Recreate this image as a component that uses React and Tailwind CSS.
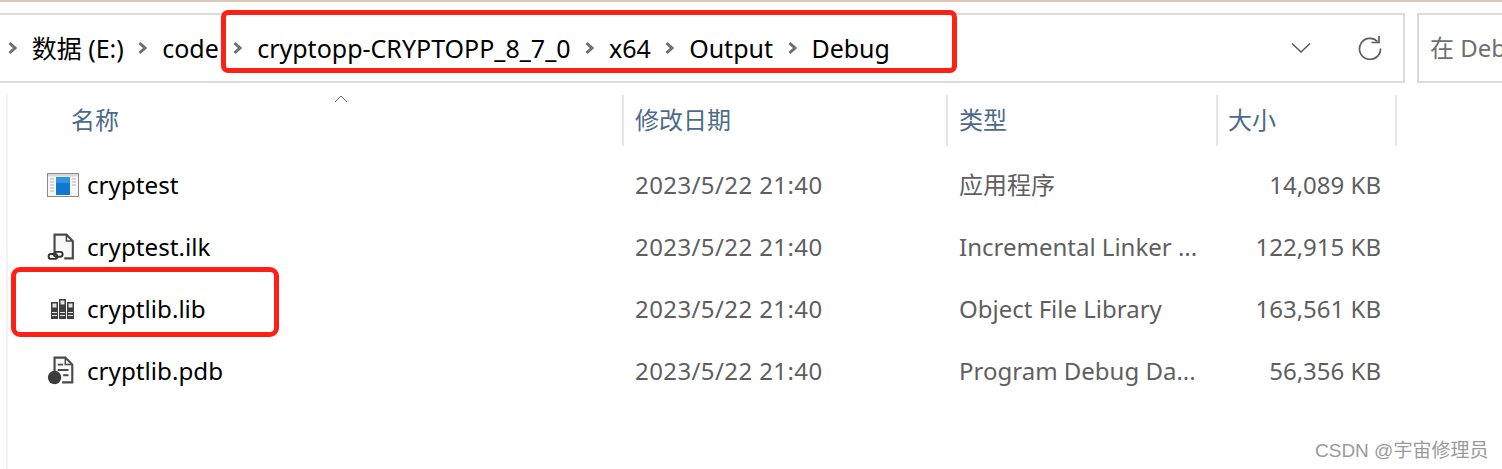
import React from 'react';

const FONT = "font-['Noto_Sans','Noto_Sans_CJK_SC',sans-serif]";

const ChevronSep = () => (
  <svg width="9" height="14" viewBox="0 0 9 14" className="shrink-0">
    <path d="M1.5 2 L7 7 L1.5 12" fill="none" stroke="#6e6e6e" strokeWidth="3" />
  </svg>
);

const ExeIcon = () => (
  <svg width="32" height="24" viewBox="0 0 32 24">
    <rect x="0.5" y="0.5" width="31" height="23" fill="#f7f7f7" stroke="#8a8a8a" />
    <rect x="1" y="1" width="30" height="2.5" fill="#d9d9d9" />
    <rect x="9" y="4" width="14" height="18" fill="#0f78d0" />
    <rect x="9" y="4" width="14" height="6" fill="#2f95e2" />
    <path d="M3 6h4M3 9h4M3 12h4M3 15h4M3 18h4M25 6h4M25 9h4M25 12h4" stroke="#b5b5b5" strokeWidth="1" />
  </svg>
);

const IlkIcon = () => (
  <svg width="28" height="28" viewBox="0 0 26 26" className="mr-[4px]">
    <path d="M7 18 V1.5 H18 L24 7.5 V23.5 H16" fill="#f8f8f8" stroke="#4a4a4a" strokeWidth="2" />
    <path d="M18 1.5 V7.5 H24" fill="none" stroke="#4a4a4a" strokeWidth="1.4" />
    <rect x="1.5" y="19.5" width="8" height="4.5" rx="2.2" fill="none" stroke="#333" strokeWidth="1.8" />
    <rect x="6.5" y="17.5" width="8" height="4.5" rx="2.2" fill="none" stroke="#333" strokeWidth="1.8" />
  </svg>
);

const LibIcon = () => (
  <svg width="26" height="22" viewBox="0 0 26 22">
    <rect x="1" y="4" width="7" height="17" fill="#3f3f3f" />
    <rect x="9" y="1" width="7" height="20" fill="#3f3f3f" />
    <rect x="17" y="4" width="7" height="17" fill="#3f3f3f" />
    <rect x="2.5" y="5.5" width="4" height="4" fill="#e4e4e4" />
    <rect x="10.5" y="2.5" width="4" height="4" fill="#e4e4e4" />
    <rect x="18.5" y="5.5" width="4" height="4" fill="#e4e4e4" />
    <path d="M2 14.5h5M2 17.5h5M10 14.5h5M10 17.5h5M18 14.5h5M18 17.5h5" stroke="#e4e4e4" strokeWidth="1" />
  </svg>
);

const PdbIcon = () => (
  <svg width="28" height="29" viewBox="0 0 26 27" className="mr-[4px]">
    <path d="M7 14 V1.5 H17 L23.5 8 V24.5 H14" fill="#f8f8f8" stroke="#4a4a4a" strokeWidth="2" />
    <path d="M17 1.5 V8 H23.5" fill="none" stroke="#4a4a4a" strokeWidth="1.4" />
    <path d="M10 8h5M10 13h10M15 18h5" stroke="#4a4a4a" strokeWidth="1.8" />
    <circle cx="7" cy="20" r="6.2" fill="#3c3c3c" />
  </svg>
);

const crumbs = ['数据 (E:)', 'code', 'cryptopp-CRYPTOPP_8_7_0', 'x64', 'Output', 'Debug'];

const files = [
  { name: 'cryptest', icon: <ExeIcon />, date: '2023/5/22 21:40', type: '应用程序', size: '14,089 KB' },
  { name: 'cryptest.ilk', icon: <IlkIcon />, date: '2023/5/22 21:40', type: 'Incremental Linker ...', size: '122,915 KB' },
  { name: 'cryptlib.lib', icon: <LibIcon />, date: '2023/5/22 21:40', type: 'Object File Library', size: '163,561 KB' },
  { name: 'cryptlib.pdb', icon: <PdbIcon />, date: '2023/5/22 21:40', type: 'Program Debug Da...', size: '56,356 KB' },
];

const App = () => {
  return (
    <div className={`relative h-[469px] w-[1502px] overflow-hidden bg-white ${FONT}`}>
      <div className="h-[3px] border-t-[2px] border-[#dfc7b8]" />

      {/* address bar and search box */}
      <div className="mt-[10px] flex h-[70px] gap-[12px]">
        <div className="flex w-[1405px] shrink-0 items-center border-y-2 border-r-2 border-[#dcdcdc] pl-[8px]">
          <div className="flex items-center gap-[14.7px] text-[25px] text-black">
            {crumbs.map((c) => (
              <React.Fragment key={c}>
                <ChevronSep />
                <span className="whitespace-nowrap leading-[32px]">{c}</span>
              </React.Fragment>
            ))}
          </div>
          <div className="ml-auto flex items-center">
            <svg width="20" height="12" viewBox="0 0 20 12">
              <path d="M1 1.5 L10 10 L19 1.5" fill="none" stroke="#5c5c5c" strokeWidth="1.6" />
            </svg>
            <svg width="24" height="24" viewBox="0 0 24 24" className="ml-[47px] mr-[21px]">
              <path d="M19.5 5.5 A10.5 10.5 0 1 0 22.5 12.5" fill="none" stroke="#5c5c5c" strokeWidth="1.7" />
              <path d="M13.5 6.5 H21 V0" fill="none" stroke="#5c5c5c" strokeWidth="1.7" />
            </svg>
          </div>
        </div>
        <div className="flex min-w-0 flex-1 items-center overflow-hidden border-y-2 border-l-2 border-[#dcdcdc] pl-[11px]">
          <span className="whitespace-nowrap text-[24px] text-[#6f6f6f]">在 Debug</span>
        </div>
      </div>

      {/* file list */}
      <div className="ml-[6px] mt-[12px] h-[374px] border-l-2 border-[#f2f2f2]">
        <div className="relative grid h-[51px] grid-cols-[614px_324px_270px_181px] text-[24px] text-[#4c6a8c]">
          <div className="pl-[63px] leading-[50px]">名称</div>
          <div className="border-l-2 border-[#e6e6e6] pl-[11px] leading-[50px]">修改日期</div>
          <div className="border-l-2 border-[#e6e6e6] pl-[11px] leading-[50px]">类型</div>
          <div className="border-x-2 border-[#e6e6e6] pl-[10px] leading-[50px]">大小</div>
          <svg width="14" height="8" viewBox="0 0 14 8" className="absolute left-[326px] top-0">
            <path d="M1 7 L7 1 L13 7" fill="none" stroke="#6a6a6a" strokeWidth="1" />
          </svg>
        </div>
        <div className="mt-[8px]">
          {files.map((f) => (
            <div key={f.name} className="grid h-[62px] grid-cols-[614px_324px_270px_165px] items-center text-[24px]">
              <div className="flex items-center">
                <div className="flex w-[79px] shrink-0 justify-end pr-[6px]">
                  <div className="flex w-[36px] justify-center">{f.icon}</div>
                </div>
                <span className="text-[24.2px] text-black">{f.name}</span>
              </div>
              <div className="pl-[13px] tracking-[0.4px] text-[#5f5f5f]">{f.date}</div>
              <div className="whitespace-nowrap pl-[13px] text-[#5f5f5f]">{f.type}</div>
              <div className="text-right text-[#5f5f5f]">{f.size}</div>
            </div>
          ))}
        </div>
      </div>

      {/* annotation boxes drawn over the screenshot */}
      <div className="absolute left-[221px] top-[10px] h-[63px] w-[736px] rounded-[7px] border-[5px] border-[#fe2015]" />
      <div className="absolute left-[11px] top-[267px] h-[70px] w-[268px] rounded-[9px] border-[5px] border-[#fe2015]" />

      <div className="absolute left-[1315px] top-[437px] whitespace-nowrap font-['Liberation_Sans','Noto_Sans_CJK_SC',sans-serif] text-[19px] text-[#9a9a9a]">
        CSDN @宇宙修理员
      </div>
    </div>
  );
};

export default App;
